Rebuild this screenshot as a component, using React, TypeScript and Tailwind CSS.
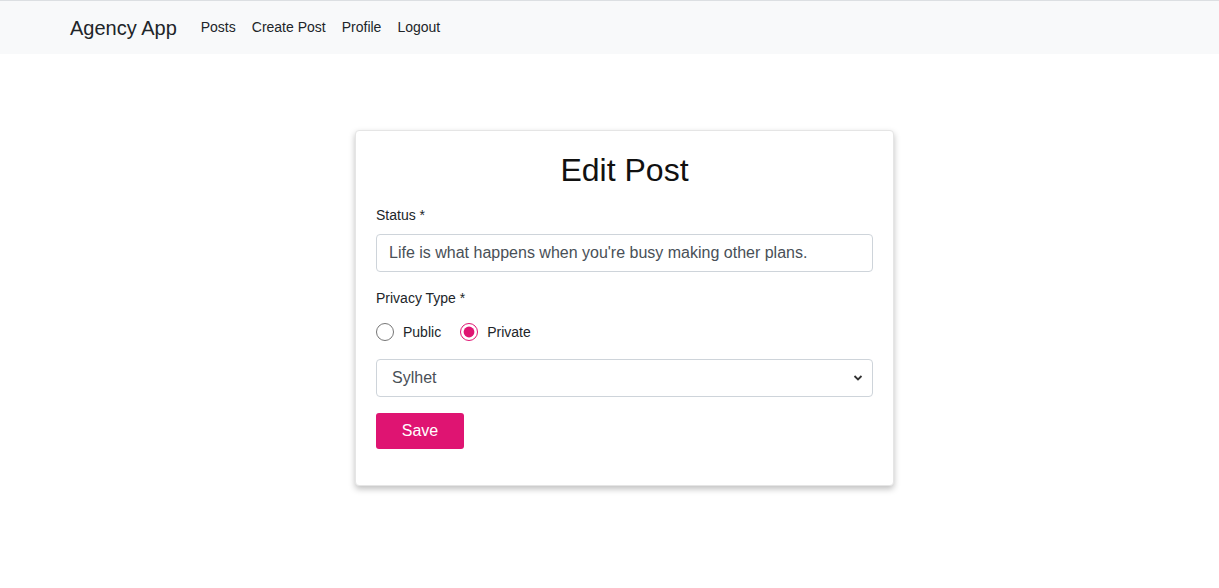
import { useState } from "react";

const App = () => {
  const [privacy, setPrivacy] = useState("private");
  const [status, setStatus] = useState("Life is what happens when you're busy making other plans.");
  const [city, setCity] = useState("Sylhet");

  const links = ["Posts", "Create Post", "Profile", "Logout"];

  return (
    <div className="min-h-screen bg-white text-[#212529] font-['Liberation_Sans',Arial,sans-serif]">
      {/* Navbar */}
      <nav className="h-[54px] bg-[#f8f9fa] border-t border-[#dcdfe2] flex items-center pl-[70px]">
        <span className="text-[20px] text-[#212529] mr-[16px]">Agency App</span>
        <ul className="flex items-center">
          {links.map((l) => (
            <li key={l}>
              <a href="#" className="block px-[8px] text-[14px] text-[#212529]">
                {l}
              </a>
            </li>
          ))}
        </ul>
      </nav>

      {/* Card */}
      <div className="flex justify-center pt-[76px] pl-[30px]">
        <div className="w-[539px] bg-white rounded-[4px] border border-[#e5e5e5] shadow-[0_3px_6px_rgba(0,0,0,0.25)] px-[20px] pt-[20px] pb-[36px]">
          <h1 className="text-center text-[32px] leading-[38px] text-[#111]">Edit Post</h1>

          <div className="mt-[16px]">
            <label className="block text-[14px] leading-[21px] text-[#212529]">Status *</label>
            <input
              value={status}
              onChange={(e) => setStatus(e.target.value)}
              className="mt-[8px] w-full h-[38px] px-[12px] text-[16px] text-[#495057] border border-[#ced4da] rounded-[4px] outline-none"
            />
          </div>

          <div className="mt-[16px]">
            <label className="block text-[14px] leading-[21px] text-[#212529]">Privacy Type *</label>
            <div className="mt-[11px] flex items-center h-[24px] gap-[19px]">
              <label className="flex items-center gap-[9px] text-[14px]">
                <input
                  type="radio"
                  name="privacy"
                  checked={privacy === "public"}
                  onChange={() => setPrivacy("public")}
                  className="w-[18px] h-[18px] m-0 accent-[#df1472]"
                />
                Public
              </label>
              <label className="flex items-center gap-[9px] text-[14px]">
                <input
                  type="radio"
                  name="privacy"
                  checked={privacy === "private"}
                  onChange={() => setPrivacy("private")}
                  className="w-[18px] h-[18px] m-0 accent-[#df1472]"
                />
                Private
              </label>
            </div>
          </div>

          <div className="mt-[15px] relative">
            <select
              value={city}
              onChange={(e) => setCity(e.target.value)}
              className="w-full h-[38px] pl-[15px] pr-8 text-[16px] text-[#495057] bg-white border border-[#ced4da] rounded-[4px] appearance-none outline-none"
            >
              <option>Dhaka</option>
              <option>Sylhet</option>
              <option>Chittagong</option>
            </select>
            <svg
              className="absolute right-[10px] top-[15px] pointer-events-none"
              width="10"
              height="8"
              viewBox="0 0 10 8"
            >
              <path d="M1.5 2 L5 5.5 L8.5 2" fill="none" stroke="#333" strokeWidth="1.8" />
            </svg>
          </div>

          <button className="mt-[16px] w-[88px] h-[36px] bg-[#df1472] text-white text-[16px] rounded-[3px]">
            Save
          </button>
        </div>
      </div>
    </div>
  );
};

export default App;
